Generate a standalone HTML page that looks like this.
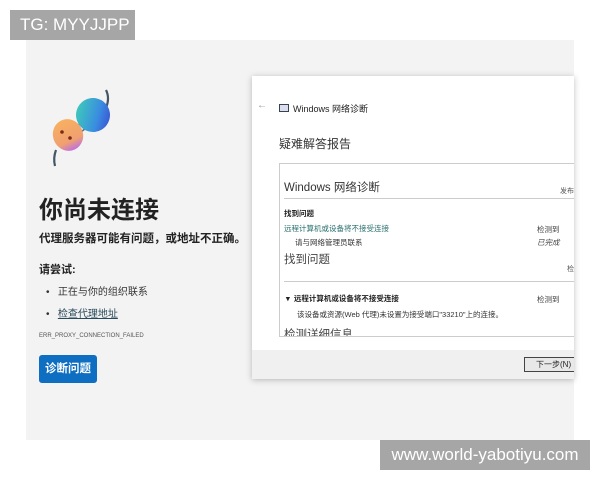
<!DOCTYPE html>
<html><head><meta charset="utf-8"><style>
*{margin:0;padding:0;box-sizing:border-box}
body{width:600px;height:480px;background:#fff;position:relative;overflow:hidden;font-family:"Liberation Sans","Noto Sans CJK SC",sans-serif}
.abs{position:absolute}
.panel{left:26px;top:40px;width:548px;height:400px;background:#f3f3f3}
.tg{left:10px;top:10px;width:125px;height:30px;background:#a6a6a6;color:#fff;font-size:17px;line-height:30px;padding-left:10px}
.wm{left:380px;top:440px;width:210px;height:30px;background:#a6a6a6;color:#fff;font-size:17px;line-height:30px;text-align:center}
.t{white-space:nowrap;color:#222}
.dlg{left:252px;top:76px;width:322px;height:303px;background:#fff;box-shadow:0 1px 6px rgba(0,0,0,.25);overflow:hidden}
.foot{left:0;top:274px;width:322px;height:29px;background:#f0f0f0}
.box{left:27px;top:87px;width:300px;height:174px;border:1px solid #ccc;border-right:none;overflow:hidden}
</style></head><body>
<div class="abs panel"></div>
<div class="abs tg">TG: MYYJJPP</div>
<svg class="abs" style="left:48px;top:88px" width="70" height="80" viewBox="0 0 70 80">
<defs><linearGradient id="g1" x1="0" y1="0" x2="1" y2="1"><stop offset="0" stop-color="#3fd8b0"/><stop offset=".6" stop-color="#3a8ee0"/><stop offset="1" stop-color="#3a3fd0"/></linearGradient>
<linearGradient id="g2" x1="0" y1="0" x2="0" y2="1"><stop offset="0" stop-color="#f8b060"/><stop offset=".7" stop-color="#f0a070"/><stop offset="1" stop-color="#c070e0"/></linearGradient></defs>
<path d="M58 2 Q62 10 58 20" stroke="#456" stroke-width="2.2" fill="none"/>
<path d="M8 62 Q5 70 7 78" stroke="#456" stroke-width="2.2" fill="none"/>
<path d="M24 42 L32 36 M28 48 L38 40" stroke="#567" stroke-width="1.5"/>
<ellipse cx="20" cy="47" rx="15" ry="16" fill="url(#g2)" transform="rotate(-25 20 47)"/>
<circle cx="14" cy="44" r="1.8" fill="#7a2a1a"/><circle cx="22" cy="50" r="1.8" fill="#7a2a1a"/>
<ellipse cx="45" cy="27" rx="17" ry="17" fill="url(#g1)" transform="rotate(-30 45 27)"/>
</svg>
<div class="abs t" style="left:39px;top:190px;font-size:24px;font-weight:bold">你尚未连接</div>
<div class="abs t" style="left:39px;top:230px;font-size:11.5px;font-weight:bold">代理服务器可能有问题，或地址不正确。</div>
<div class="abs t" style="left:39px;top:261px;font-size:11px;font-weight:bold">请尝试:</div>
<div class="abs t" style="left:46px;top:283px;font-size:10px;color:#333">•&nbsp;&nbsp;&nbsp;正在与你的组织联系</div>
<div class="abs t" style="left:46px;top:305px;font-size:10px;color:#333">•&nbsp;&nbsp;&nbsp;<span style="text-decoration:underline;color:#2a4a5a">检查代理地址</span></div>
<div class="abs t" style="left:39px;top:333px;font-size:6px;color:#555">ERR_PROXY_CONNECTION_FAILED</div>
<div class="abs" style="left:39px;top:355px;width:58px;height:28px;background:#0e6fc2;border-radius:3px;color:#fff;font-size:11.5px;font-weight:bold;line-height:28px;text-align:center">诊断问题</div>
<div class="abs dlg">
 <div class="abs t" style="left:5px;top:24px;font-size:10px;color:#999">←</div>
 <div class="abs" style="left:27px;top:28px;width:10px;height:8px;border:1px solid #345;background:#dde"></div>
 <div class="abs t" style="left:41px;top:26px;font-size:9px">Windows 网络诊断</div>
 <div class="abs t" style="left:27px;top:59px;font-size:12px;color:#333">疑难解答报告</div>
 <div class="abs box">
  <div class="abs t" style="left:4px;top:15px;font-size:11.5px;color:#333">Windows 网络诊断</div>
  <div class="abs t" style="left:280px;top:22px;font-size:7px;color:#555">发布</div>
  <div class="abs" style="left:4px;top:34px;width:300px;height:1px;background:#ccc"></div>
  <div class="abs t" style="left:4px;top:44px;font-size:7.5px;font-weight:bold">找到问题</div>
  <div class="abs t" style="left:4px;top:59px;font-size:7.5px;color:#2a7070">远程计算机或设备将不接受连接</div>
  <div class="abs t" style="left:257px;top:60px;font-size:7.5px;color:#444">检测到</div>
  <div class="abs t" style="left:15px;top:73px;font-size:7.5px;color:#333">请与网络管理员联系</div>
  <div class="abs t" style="left:257px;top:73px;font-size:7.5px;color:#444;font-style:italic">已完成</div>
  <div class="abs t" style="left:4px;top:87px;font-size:11.5px;color:#444">找到问题</div>
  <div class="abs t" style="left:287px;top:100px;font-size:7px;color:#555">检</div>
  <div class="abs" style="left:4px;top:117px;width:300px;height:1px;background:#ccc"></div>
  <div class="abs t" style="left:6px;top:129px;font-size:7.5px;font-weight:bold">▾&nbsp;&nbsp;远程计算机或设备将不接受连接</div>
  <div class="abs t" style="left:257px;top:130px;font-size:7.5px;color:#444">检测到</div>
  <div class="abs t" style="left:17px;top:145px;font-size:7.5px;color:#333">该设备或资源(Web 代理)未设置为接受端口"33210"上的连接。</div>
  <div class="abs t" style="left:4px;top:162px;font-size:11.5px;color:#444">检测详细信息</div>
 </div>
 <div class="abs foot"><div class="abs t" style="left:272px;top:7px;width:55px;height:15px;border:1px solid #444;background:#e8e8e8;font-size:8px;padding-left:11px;line-height:13px">下一步(N)</div></div>
</div>
<div class="abs wm">www.world-yabotiyu.com</div>
</body></html>
